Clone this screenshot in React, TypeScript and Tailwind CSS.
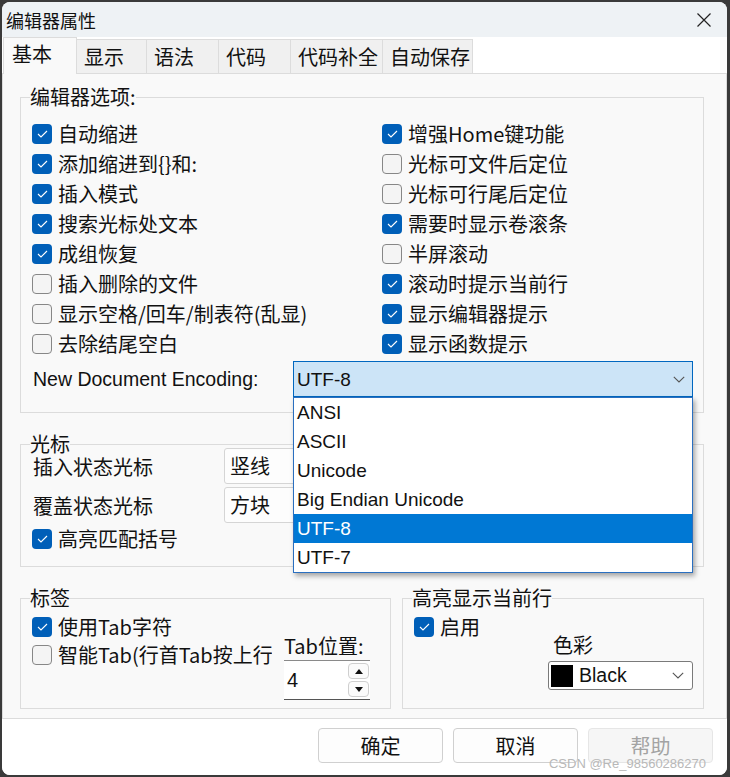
import React from "react";

const CJK = "[font-family:'Noto_Sans_CJK_SC',sans-serif]";
const LAT = "[font-family:'Liberation_Sans',Arial,sans-serif]";

function Box({ checked }: { checked: boolean }) {
  return checked ? (
    <span className="w-[20px] h-[20px] rounded-[4px] bg-[#005fb8] flex items-center justify-center shrink-0">
      <svg width="11" height="8" viewBox="0 0 11 8">
        <path d="M1 4 L4 7 L10 1" fill="none" stroke="white" strokeWidth="1.1" />
      </svg>
    </span>
  ) : (
    <span className="w-[20px] h-[20px] rounded-[4px] bg-[#f4f4f4] border border-[#878787] shrink-0" />
  );
}

function Check({ checked, label, h = "h-[30px]" }: { checked: boolean; label: string; h?: string }) {
  return (
    <div className={`flex items-center gap-[6px] ${h} whitespace-nowrap`}>
      <Box checked={checked} />
      <span className="text-[20px] leading-[22px] text-[#111]">{label}</span>
    </div>
  );
}

function Chevron() {
  return (
    <svg width="12" height="7" viewBox="0 0 12 7">
      <path d="M0.8 0.8 L6 6 L11.2 0.8" fill="none" stroke="#555" strokeWidth="1.1" />
    </svg>
  );
}

function Legend({ text }: { text: string }) {
  return (
    <span className="absolute left-[9px] top-[-12px] bg-[#f9f9f9] text-[20px] leading-[22px] text-[#111] whitespace-nowrap">
      {text}
    </span>
  );
}

const left = [
  { c: true, t: "自动缩进" },
  { c: true, t: "添加缩进到{}和:" },
  { c: true, t: "插入模式" },
  { c: true, t: "搜索光标处文本" },
  { c: true, t: "成组恢复" },
  { c: false, t: "插入删除的文件" },
  { c: false, t: "显示空格/回车/制表符(乱显)" },
  { c: false, t: "去除结尾空白" },
];
const right = [
  { c: true, t: "增强Home键功能" },
  { c: false, t: "光标可文件后定位" },
  { c: false, t: "光标可行尾后定位" },
  { c: true, t: "需要时显示卷滚条" },
  { c: false, t: "半屏滚动" },
  { c: true, t: "滚动时提示当前行" },
  { c: true, t: "显示编辑器提示" },
  { c: true, t: "显示函数提示" },
];

const tabs = [
  { t: "显示", w: "w-[70px]" },
  { t: "语法", w: "w-[72px]" },
  { t: "代码", w: "w-[72px]" },
  { t: "代码补全", w: "w-[92px]" },
  { t: "自动保存", w: "w-[90px]" },
];

const encodings = ["ANSI", "ASCII", "Unicode", "Big Endian Unicode", "UTF-8", "UTF-7"];

export default function App() {
  return (
    <div className={`w-[730px] h-[777px] bg-[#3a3a3a] pt-[2px] pl-[2px] ${CJK}`}>
      <div className="relative flex flex-col w-[725px] h-[773px] rounded-[8px] overflow-hidden bg-white">
        {/* Title bar */}
        <div className="h-[35px] bg-[#eef2f5] flex items-center justify-between pl-[4px] pr-[16px] shrink-0">
          <span className="text-[18px] leading-[22px] text-[#111]">编辑器属性</span>
          <svg width="14" height="14" viewBox="0 0 14 14">
            <path d="M0.5 0.5 L13.5 13.5 M13.5 0.5 L0.5 13.5" stroke="#222" strokeWidth="1.2" fill="none" />
          </svg>
        </div>

        {/* Tabs */}
        <div className="h-[36px] bg-white flex items-end pl-[1px] shrink-0 relative z-10">
          <div className="w-[74px] h-[37px] -mb-px bg-[#f9f9f9] border border-b-0 border-[#dcdcdc] flex items-center pl-[8px] pb-[4px] text-[20px] text-[#111]">
            基本
          </div>
          {tabs.map((tb) => (
            <div
              key={tb.t}
              className={`${tb.w} h-[34px] bg-[#f0f0f0] border-t border-r border-[#dcdcdc] flex items-center pl-[7px] text-[20px] text-[#111] whitespace-nowrap`}
            >
              {tb.t}
            </div>
          ))}
        </div>

        {/* Panel */}
        <div className="h-[646px] bg-[#f9f9f9] border border-[#dcdcdc] shrink-0 pl-[17px]">
          {/* Group 1 */}
          <div className="relative mt-[23px] w-[684px] border border-[#dcdcdc] pt-[21px] pb-[15px] z-20">
            <Legend text="编辑器选项:" />
            <div className="grid grid-cols-[350px_1fr] pl-[11px]">
              <div className="flex flex-col">
                {left.map((r) => (
                  <Check key={r.t} checked={r.c} label={r.t} />
                ))}
              </div>
              <div className="flex flex-col">
                {right.map((r) => (
                  <Check key={r.t} checked={r.c} label={r.t} />
                ))}
              </div>
            </div>
            <div className="mt-[2px] h-[36px] flex items-center justify-between pl-[12px] pr-[10px]">
              <span className={`${LAT} text-[19.5px] text-[#111] pt-[2px]`}>New Document Encoding:</span>
              <div className="relative w-[400px] h-[36px]">
                <div className="w-full h-full bg-[#cce4f7] border border-[#0067c0] flex items-center justify-between pl-[3px] pr-[7px]">
                  <span className={`${LAT} text-[19px] text-[#111] pt-[2px]`}>UTF-8</span>
                  <Chevron />
                </div>
                <div className="absolute left-0 top-[36px] w-[400px] bg-white border border-[#2a6fc0] shadow-[2px_3px_5px_rgba(0,0,0,0.35)]">
                  {encodings.map((e, i) => (
                    <div
                      key={e}
                      className={`h-[29px] flex items-center pl-[3px] pt-[2px] ${LAT} text-[19px] ${
                        i === 4 ? "bg-[#0078d4] text-white" : "text-[#111]"
                      }`}
                    >
                      {e}
                    </div>
                  ))}
                </div>
              </div>
            </div>
          </div>

          {/* Group 2 */}
          <div className="relative mt-[31px] w-[684px] border border-[#dcdcdc] pt-[3px] pb-[12px]">
            <Legend text="光标" />
            <div className="h-[36px] flex items-center pl-[12px]">
              <span className="w-[191px] text-[20px] text-[#111] pt-[2px]">插入状态光标</span>
              <div className="w-[200px] h-[36px] border border-[#d5d5d5] rounded-[3px] bg-[#fdfdfd] flex items-center pl-[5px] text-[20px] text-[#111]">
                竖线
              </div>
            </div>
            <div className="mt-[3px] h-[36px] flex items-center pl-[12px]">
              <span className="w-[191px] text-[20px] text-[#111] pt-[2px]">覆盖状态光标</span>
              <div className="w-[200px] h-[36px] border border-[#d5d5d5] rounded-[3px] bg-[#fdfdfd] flex items-center pl-[5px] text-[20px] text-[#111]">
                方块
              </div>
            </div>
            <div className="mt-[1px] pl-[11px]">
              <Check checked label="高亮匹配括号" />
            </div>
          </div>

          {/* Group 3 & 4 */}
          <div className="mt-[31px] flex gap-[11px]">
            <div className="relative w-[371px] h-[111px] border border-[#dcdcdc] flex pl-[11px]">
              <Legend text="标签" />
              <div className="w-[240px] overflow-hidden pt-[14px] flex flex-col">
                <Check checked label="使用Tab字符" h="h-[28px]" />
                <Check checked={false} label="智能Tab(行首Tab按上行缩进)" h="h-[28px]" />
              </div>
              <div className="ml-[12px] pt-[36px] flex flex-col">
                <span className="h-[22px] leading-[22px] text-[20px] text-[#111] whitespace-nowrap">Tab位置:</span>
                <div className="mt-[3px] w-[86px] h-[40px] bg-white border-t border-b border-t-[#8a8a8a] border-b-[#555] flex items-center justify-between pl-[3px] pr-[1px]">
                  <span className={`${LAT} text-[20px] text-[#111]`}>4</span>
                  <div className="flex flex-col gap-[2px]">
                    <div className="w-[21px] h-[16px] bg-[#fbfbfb] border border-[#cfcfcf] rounded-[4px] flex items-center justify-center">
                      <svg width="8" height="5" viewBox="0 0 8 5">
                        <path d="M0 5 L4 0 L8 5 Z" fill="#111" />
                      </svg>
                    </div>
                    <div className="w-[21px] h-[16px] bg-[#fbfbfb] border border-[#cfcfcf] rounded-[4px] flex items-center justify-center">
                      <svg width="8" height="5" viewBox="0 0 8 5">
                        <path d="M0 0 L8 0 L4 5 Z" fill="#111" />
                      </svg>
                    </div>
                  </div>
                </div>
              </div>
            </div>

            <div className="relative w-[302px] h-[111px] border border-[#dcdcdc] flex justify-between pl-[11px] pr-[10px]">
              <Legend text="高亮显示当前行" />
              <div className="pt-[14px]">
                <Check checked label="启用" h="h-[28px]" />
              </div>
              <div className="pt-[35px] w-[145px] flex flex-col">
                <span className="h-[22px] leading-[22px] pl-[5px] text-[20px] text-[#111]">色彩</span>
                <div className="mt-[5px] h-[29px] bg-white border border-[#7a7a7a] rounded-[3px] flex items-center pl-[2px] pr-[8px]">
                  <span className="w-[22px] h-[22px] bg-black shrink-0" />
                  <span className={`${LAT} text-[19.5px] text-[#111] ml-[6px] pt-[1px]`}>Black</span>
                  <span className="ml-auto flex">
                    <Chevron />
                  </span>
                </div>
              </div>
            </div>
          </div>
        </div>

        {/* Footer */}
        <div className="flex-1 bg-white flex justify-end items-start gap-[10px] pt-[9px] pr-[14px]">
          <div className="w-[125px] h-[35px] rounded-[4px] border border-[#d0d0d0] bg-[#fdfdfd] flex items-center justify-center text-[20px] text-[#111]">
            确定
          </div>
          <div className="w-[125px] h-[35px] rounded-[4px] border border-[#d0d0d0] bg-[#fdfdfd] flex items-center justify-center text-[20px] text-[#111]">
            取消
          </div>
          <div className="w-[125px] h-[35px] rounded-[4px] border border-[#e6e6e6] bg-[#f6f6f6] flex items-center justify-center text-[20px] text-[#a3a3a3]">
            帮助
          </div>
        </div>

        <span className={`absolute right-[21px] bottom-[5px] ${LAT} text-[13px] leading-[13px] text-[#b8b8b8]`}>
          CSDN @Re_98560286270
        </span>
      </div>
    </div>
  );
}
